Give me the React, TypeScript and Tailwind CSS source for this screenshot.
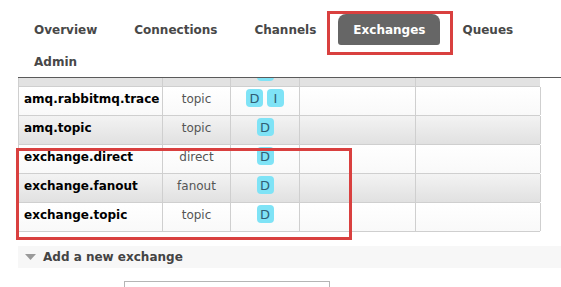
import React from 'react';

type Row = {
  name: string;
  type: string;
  features: string[];
};

const rows: Row[] = [
  { name: 'amq.rabbitmq.trace', type: 'topic', features: ['D', 'I'] },
  { name: 'amq.topic', type: 'topic', features: ['D'] },
  { name: 'exchange.direct', type: 'direct', features: ['D'] },
  { name: 'exchange.fanout', type: 'fanout', features: ['D'] },
  { name: 'exchange.topic', type: 'topic', features: ['D'] },
];

const tabs = ['Overview', 'Connections', 'Channels', 'Exchanges', 'Queues', 'Admin'];

// 機能バッジ (D = durable, I = internal)
const Badge: React.FC<{ label: string }> = ({ label }) => (
  <span className="flex h-[18px] w-[17px] items-center justify-center rounded-[4px] bg-[#7fe3f6] text-[13px] leading-none text-[#2f5f75]">
    {label}
  </span>
);

const App: React.FC = () => {
  return (
    <div className="relative h-[287px] w-[561px] overflow-hidden bg-white font-['DejaVu_Sans','Liberation_Sans',sans-serif]">
      {/* ナビゲーション */}
      <nav className="flex flex-wrap gap-x-[7px] gap-y-[1px] pl-[19px] pt-[14px]">
        {tabs.map((t) => (
          <div
            key={t}
            className={`flex h-[31px] items-center px-[15px] text-[12px] font-bold ${
              t === 'Exchanges' ? 'rounded-t-[8px] rounded-b-[3px] bg-[#666666] text-white' : 'text-[#484848]'
            }`}
          >
            {t}
          </div>
        ))}
      </nav>

      <div className="ml-[18px] border-t border-[#5a5a5a]">
        <div className="w-[522px]">
          {/* 上にスクロールされた行の一部 */}
          <div className="grid h-[9px] grid-cols-[144px_68px_69px_116px_125px] overflow-hidden border-b border-l border-[#cfcfcf] bg-[#e2e2e2]">
            <div className="border-r border-[#cfcfcf]" />
            <div className="border-r border-[#cfcfcf]" />
            <div className="flex justify-center border-r border-[#cfcfcf]">
              <div className="mt-[-15px] h-[18px] w-[17px] rounded-[4px] bg-[#7fe3f6]" />
            </div>
            <div className="border-r border-[#cfcfcf]" />
            <div className="border-r border-[#cfcfcf]" />
          </div>

          {rows.map((r, i) => (
            <div
              key={r.name}
              className={`grid h-[29px] grid-cols-[144px_68px_69px_116px_125px] border-b border-l border-[#cfcfcf] ${
                i % 2 === 1 ? 'bg-gradient-to-b from-[#f3f3f3] to-[#e1e1e1]' : 'bg-gradient-to-b from-white to-[#f9f9f9]'
              }`}
            >
              <div className="border-r border-[#cfcfcf] pl-[5px] pt-[4px] text-[12px] font-bold leading-[16px] text-black">
                {r.name}
              </div>
              <div className="border-r border-[#cfcfcf] pt-[4px] text-center text-[12px] leading-[16px] text-[#555]">
                {r.type}
              </div>
              <div className="flex justify-center gap-[4px] border-r border-[#cfcfcf] pt-[2px]">
                {r.features.map((f) => (
                  <Badge key={f} label={f} />
                ))}
              </div>
              <div className="border-r border-[#cfcfcf]" />
              <div className="border-r border-[#cfcfcf]" />
            </div>
          ))}
        </div>
      </div>

      {/* 新規エクスチェンジ追加 */}
      <div className="ml-[18px] mt-[14px] flex h-[22px] items-center bg-[#f7f7f7]">
        <svg className="ml-[7px]" width="11" height="6" viewBox="0 0 11 6">
          <polygon points="0,0 11,0 5.5,6" fill="#9a9a9a" />
        </svg>
        <span className="ml-[7px] text-[12px] font-bold text-[#444]">Add a new exchange</span>
      </div>

      <div className="ml-[124px] mt-[13px] h-[10px] w-[206px] border-l border-r border-t border-[#b5b5b5]" />

      {/* 注釈の赤枠 */}
      <div className="absolute left-[327px] top-[11px] h-[44px] w-[126px] border-[3px] border-[#d9403f]" />
      <div className="absolute left-[16px] top-[148px] h-[92px] w-[336px] border-[3px] border-[#d9403f]" />
    </div>
  );
};

export default App;
